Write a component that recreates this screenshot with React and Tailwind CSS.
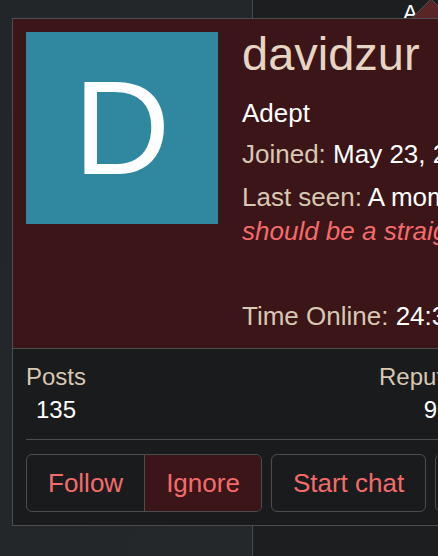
import React from "react";

const font = { fontFamily: '"Liberation Sans", Arial, sans-serif' };

const stats = [
  { label: "Posts", value: "135" },
  { label: "Reputation", value: "96" },
];

function Stat({ label, value }) {
  return (
    <div className="flex flex-col items-center">
      <span className="text-[24px] leading-[32px] text-[#d7c8b4]">{label}</span>
      <span className="text-[24px] leading-[34px] text-white">{value}</span>
    </div>
  );
}

export default function App() {
  return (
    <div
      className="relative w-[438px] h-[556px] overflow-hidden flex bg-[#1d1e1f]"
      style={font}
    >
      {/* page behind the popover */}
      <div className="w-[253px] h-full bg-gradient-to-br from-[#222628] to-[#25282a] border-r border-[#46494b]" />
      <div className="flex-1 h-full bg-[#1d1e1f] relative">
        <span className="absolute left-[150px] top-[2px] text-[22px] leading-none text-white">A</span>
        <svg className="absolute left-[158px] top-0" width="40" height="19" viewBox="0 0 40 19">
          <polygon points="0,19 20,-1 40,19" fill="#5a2527" stroke="#4b4e50" strokeWidth="1" />
        </svg>
      </div>

      {/* member card popover */}
      <div className="absolute left-[12px] top-[18px] w-[560px] border border-[#4b4e50] bg-[#1a1b1c]">
        <div className="flex gap-6 bg-[#3b1517] p-[13px] pb-[15px] border-b border-[#4b4e50]">
          <div className="w-[192px] h-[192px] shrink-0 bg-[#2f87a0] flex items-center justify-center">
            <span className="text-[134px] leading-none text-white">D</span>
          </div>
          <div className="flex flex-col whitespace-nowrap">
            <h2 className="-mt-[2px] text-[47px] leading-none text-[#e6d5c3]">davidzur</h2>
            <p className="mt-[19px] text-[26px] leading-[34px] text-white">Adept</p>
            <p className="mt-[7px] text-[26px] leading-[34px] text-white">
              <span className="text-[#d7c8b4]">Joined:</span> May 23, 2016
            </p>
            <p className="mt-[9px] text-[26px] leading-[34px] text-white">
              <span className="text-[#d7c8b4]">Last seen:</span> A moment ago
              <br />
              <em className="text-[#f46b6b]">should be a straight line</em>
            </p>
            <p className="mt-[51px] text-[26px] leading-[34px] text-white">
              <span className="text-[#d7c8b4]">Time Online:</span> 24:31:05
            </p>
          </div>
        </div>

        <div className="px-[13px] pt-[12px] pb-[13px]">
          <div className="flex gap-[293px]">
            {stats.map((s) => (
              <Stat key={s.label} label={s.label} value={s.value} />
            ))}
          </div>
          <div className="mt-[12px] border-t border-[#4b4e50]" />
          <div className="mt-[14px] flex gap-[9px] text-[26px] text-[#f46b6b]">
            <div className="flex h-[58px] rounded-md border border-[#4b4e50] overflow-hidden">
              <button className="px-[21px] border-r border-[#4b4e50]">Follow</button>
              <button className="px-[21px] bg-[#3b1517]">Ignore</button>
            </div>
            <button className="h-[58px] px-[21px] rounded-md border border-[#4b4e50]">Start chat</button>
            <button className="h-[58px] px-[21px] rounded-md border border-[#4b4e50]">Find</button>
          </div>
        </div>
      </div>
    </div>
  );
}
